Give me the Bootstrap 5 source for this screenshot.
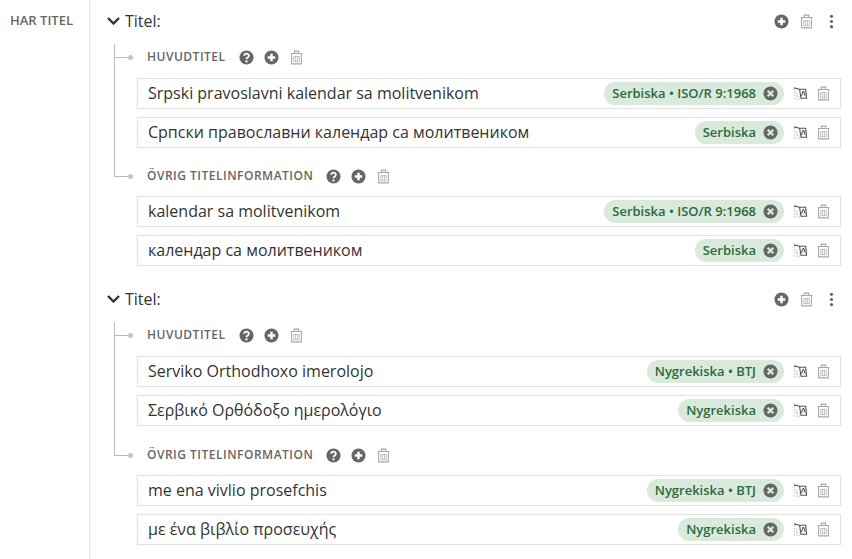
<!DOCTYPE html>
<html lang="en">
<head>
  <meta charset="UTF-8">
  <title>Har titel</title>
  <link href="https://cdn.jsdelivr.net/npm/bootstrap@5.3.3/dist/css/bootstrap.min.css" rel="stylesheet">
  <script src="https://cdn.jsdelivr.net/npm/bootstrap@5.3.3/dist/js/bootstrap.bundle.min.js"></script>
  <style>
    body { font-family: "Open Sans", sans-serif; color: #333; background: #fff; overflow: hidden; }
    .prop-label { width: 89px; padding: 12px 0 0 10px; font-size: 13px; font-weight: 600; color: #666; flex: none; line-height: 16px; }
    .prop-body { border-left: 1px solid #e4e4e4; padding: 6px 11px 0 17px; min-height: 559px; }
    .work-head { height: 30px; font-size: 16px; line-height: 30px; color: #333; }
    .work-head .chev { width: 13px; height: 8px; margin-right: 5px; }
    .end-icons { gap: 10px; margin-right: 2px; }
    .tree { margin: 4px 0 0 7px; }
    .tree-sec { position: relative; padding-left: 23px; }
    .tree-sec::before { content: ""; position: absolute; left: 0; top: 0; bottom: -16px; border-left: 1px solid #bbb; }
    .tree-sec.last::before { bottom: auto; top: 0; height: 13px; }
    .tree-sec.last { margin-top: 15px; }
    .tree-sec.last.low { margin-top: 16px; }
    .sec-head { height: 26px; margin-bottom: 8px; font-size: 12px; font-weight: 600; letter-spacing: .5px; color: #666; position: relative; gap: 10px; }
    .tree-sec.last .sec-head { margin-bottom: 7px; }
    .sec-head::before { content: ""; position: absolute; left: -23px; top: 13px; width: 14px; border-top: 1px solid #bbb; }
    .sec-head::after { content: ""; position: absolute; left: -9px; top: 11px; width: 5px; height: 5px; border-radius: 50%; background: #c4c4c4; }
    .sec-title { margin: 0 3px 0 10px; }
    .tree-sec:first-child .sec-head { margin-top: 8px; }
    .val-row { height: 31px; margin-bottom: 8px; border: 1px solid #e2e2e2; padding: 0 9px 0 10px; font-size: 16px; line-height: 29px; color: #333; box-shadow: 0 0 1px #e6e6e6; }
    .lang-chip { height: 23px; border-radius: 12px; background: #d9eadc; color: #2b6a3f; font-size: 13px; font-weight: 600; line-height: 23px; padding: 0 6px 0 8px; gap: 7px; margin-right: 9px; white-space: nowrap; }
    .ic { width: 15px; height: 15px; flex: none; display: block; }
    .ic-trash { color: #a6a6a6; }
    .ic-dark { color: #666; }
    .row-icons { gap: 8px; }
    .next-work { margin-top: 18px; }
  </style>
</head>
<body>
  <svg width="0" height="0" class="d-block position-absolute">
    <symbol id="i-plus" viewBox="0 0 16 16"><circle cx="8" cy="8" r="7.5" fill="currentColor"/><path d="M8 4v8M4 8h8" stroke="#fff" stroke-width="2.6"/></symbol>
    <symbol id="i-help" viewBox="0 0 16 16"><circle cx="8" cy="8" r="7.5" fill="currentColor"/><path d="M5.6 6.2c0-3.100 4.900-3.100 4.900-.1 0 1.900-2.500 1.800-2.500 3.700" fill="none" stroke="#fff" stroke-width="1.900"/><circle cx="8" cy="12.200" r="1.200" fill="#fff"/></symbol>
    <symbol id="i-x" viewBox="0 0 16 16"><circle cx="8" cy="8" r="7.500" fill="currentColor"/><path d="M5 5l6 6M11 5l-6 6" stroke="#d9eadc" stroke-width="2.400"/></symbol>
    <symbol id="i-trash" viewBox="0 0 16 16"><path d="M1.800 3.800h12.400M5.600 3.600V1.200h4.800v2.400M2.800 3.800v11h10.400v-11" fill="none" stroke="currentColor" stroke-width="1.100"/><path d="M5 7h6v5.500H5zM7 7v5.500M9 7v5.500" fill="none" stroke="currentColor" stroke-width=".7"/></symbol>
    <symbol id="i-dots" viewBox="0 0 16 16"><circle cx="8" cy="2.500" r="1.700" fill="currentColor"/><circle cx="8" cy="8" r="1.700" fill="currentColor"/><circle cx="8" cy="13.500" r="1.700" fill="currentColor"/></symbol>
    <symbol id="i-trans" viewBox="0 0 16 16"><path d="M1.500 3.500v10.500h8" fill="none" stroke="#c8c8c8" stroke-width="1.200" stroke-dasharray="1.500 1.500"/><path d="M4 6.500v5h3" fill="none" stroke="#ccc" stroke-width="1"/><path d="M1 2l6 1.500M7 3.500h6.500l1 9.500h-6z" fill="none" stroke="#555" stroke-width="1.200"/><path d="M9 10.500l1.700-4.500h.8l1.500 4.500" fill="none" stroke="#555" stroke-width="1.100"/></symbol>
  </svg>

  <div class="d-flex">
    <div class="prop-label">HAR TITEL</div>
    <div class="prop-body flex-grow-1">

      <div class="work-head d-flex align-items-center">
        <svg class="chev" viewBox="0 0 13 8"><path d="M1 1l5.500 5.500L12 1" fill="none" stroke="#333" stroke-width="2.400"/></svg>
        <span>Titel:</span>
        <div class="end-icons d-flex ms-auto align-items-center">
          <svg class="ic ic-dark"><use href="#i-plus"/></svg>
          <svg class="ic ic-trash"><use href="#i-trash"/></svg>
          <svg class="ic ic-dark"><use href="#i-dots"/></svg>
        </div>
      </div>
      <div class="tree">
        <div class="tree-sec">
          <div class="sec-head d-flex align-items-center">
            <span class="sec-title">HUVUDTITEL</span>
            <svg class="ic ic-dark"><use href="#i-help"/></svg>
            <svg class="ic ic-dark"><use href="#i-plus"/></svg>
            <svg class="ic ic-trash"><use href="#i-trash"/></svg>
          </div>
          <div class="val-row d-flex align-items-center">
            <span>Srpski pravoslavni kalendar sa molitvenikom</span>
            <div class="lang-chip d-flex align-items-center ms-auto">Serbiska • ISO/R 9:1968 <svg class="ic ic-dark"><use href="#i-x"/></svg></div>
            <div class="row-icons d-flex"><svg class="ic"><use href="#i-trans"/></svg><svg class="ic ic-trash"><use href="#i-trash"/></svg></div>
          </div>
          <div class="val-row d-flex align-items-center">
            <span>Српски православни календар са молитвеником</span>
            <div class="lang-chip d-flex align-items-center ms-auto">Serbiska <svg class="ic ic-dark"><use href="#i-x"/></svg></div>
            <div class="row-icons d-flex"><svg class="ic"><use href="#i-trans"/></svg><svg class="ic ic-trash"><use href="#i-trash"/></svg></div>
          </div>
        </div>
        <div class="tree-sec last">
          <div class="sec-head d-flex align-items-center">
            <span class="sec-title">ÖVRIG TITELINFORMATION</span>
            <svg class="ic ic-dark"><use href="#i-help"/></svg>
            <svg class="ic ic-dark"><use href="#i-plus"/></svg>
            <svg class="ic ic-trash"><use href="#i-trash"/></svg>
          </div>
          <div class="val-row d-flex align-items-center">
            <span>kalendar sa molitvenikom</span>
            <div class="lang-chip d-flex align-items-center ms-auto">Serbiska • ISO/R 9:1968 <svg class="ic ic-dark"><use href="#i-x"/></svg></div>
            <div class="row-icons d-flex"><svg class="ic"><use href="#i-trans"/></svg><svg class="ic ic-trash"><use href="#i-trash"/></svg></div>
          </div>
          <div class="val-row d-flex align-items-center">
            <span>календар са молитвеником</span>
            <div class="lang-chip d-flex align-items-center ms-auto">Serbiska <svg class="ic ic-dark"><use href="#i-x"/></svg></div>
            <div class="row-icons d-flex"><svg class="ic"><use href="#i-trans"/></svg><svg class="ic ic-trash"><use href="#i-trash"/></svg></div>
          </div>
        </div>
      </div>

      <div class="work-head d-flex align-items-center next-work">
        <svg class="chev" viewBox="0 0 13 8"><path d="M1 1l5.500 5.500L12 1" fill="none" stroke="#333" stroke-width="2.400"/></svg>
        <span>Titel:</span>
        <div class="end-icons d-flex ms-auto align-items-center">
          <svg class="ic ic-dark"><use href="#i-plus"/></svg>
          <svg class="ic ic-trash"><use href="#i-trash"/></svg>
          <svg class="ic ic-dark"><use href="#i-dots"/></svg>
        </div>
      </div>
      <div class="tree">
        <div class="tree-sec">
          <div class="sec-head d-flex align-items-center">
            <span class="sec-title">HUVUDTITEL</span>
            <svg class="ic ic-dark"><use href="#i-help"/></svg>
            <svg class="ic ic-dark"><use href="#i-plus"/></svg>
            <svg class="ic ic-trash"><use href="#i-trash"/></svg>
          </div>
          <div class="val-row d-flex align-items-center">
            <span>Serviko Orthodhoxo imerolojo</span>
            <div class="lang-chip d-flex align-items-center ms-auto">Nygrekiska • BTJ <svg class="ic ic-dark"><use href="#i-x"/></svg></div>
            <div class="row-icons d-flex"><svg class="ic"><use href="#i-trans"/></svg><svg class="ic ic-trash"><use href="#i-trash"/></svg></div>
          </div>
          <div class="val-row d-flex align-items-center">
            <span>Σερβικό Ορθόδοξο ημερολόγιο</span>
            <div class="lang-chip d-flex align-items-center ms-auto">Nygrekiska <svg class="ic ic-dark"><use href="#i-x"/></svg></div>
            <div class="row-icons d-flex"><svg class="ic"><use href="#i-trans"/></svg><svg class="ic ic-trash"><use href="#i-trash"/></svg></div>
          </div>
        </div>
        <div class="tree-sec last low">
          <div class="sec-head d-flex align-items-center">
            <span class="sec-title">ÖVRIG TITELINFORMATION</span>
            <svg class="ic ic-dark"><use href="#i-help"/></svg>
            <svg class="ic ic-dark"><use href="#i-plus"/></svg>
            <svg class="ic ic-trash"><use href="#i-trash"/></svg>
          </div>
          <div class="val-row d-flex align-items-center">
            <span>me ena vivlio prosefchis</span>
            <div class="lang-chip d-flex align-items-center ms-auto">Nygrekiska • BTJ <svg class="ic ic-dark"><use href="#i-x"/></svg></div>
            <div class="row-icons d-flex"><svg class="ic"><use href="#i-trans"/></svg><svg class="ic ic-trash"><use href="#i-trash"/></svg></div>
          </div>
          <div class="val-row d-flex align-items-center">
            <span>με ένα βιβλίο προσευχής</span>
            <div class="lang-chip d-flex align-items-center ms-auto">Nygrekiska <svg class="ic ic-dark"><use href="#i-x"/></svg></div>
            <div class="row-icons d-flex"><svg class="ic"><use href="#i-trans"/></svg><svg class="ic ic-trash"><use href="#i-trash"/></svg></div>
          </div>
        </div>
      </div>

    </div>
  </div>
</body>
</html>
